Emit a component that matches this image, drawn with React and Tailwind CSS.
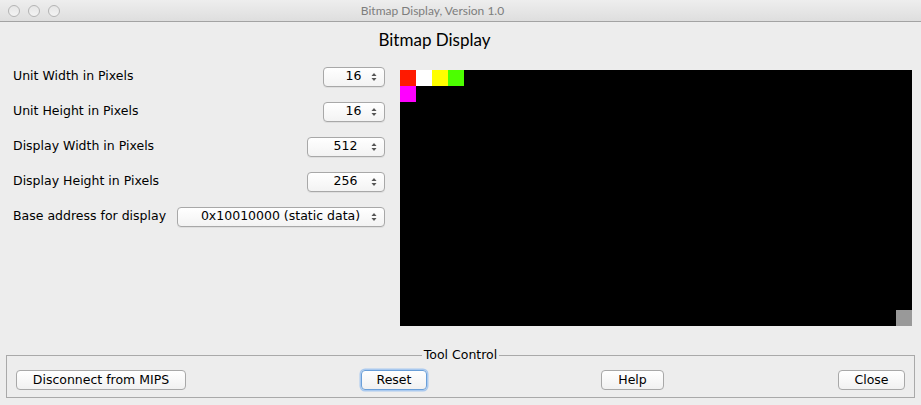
import { useState } from 'react'

const font = { fontFamily: '"DejaVu Sans", "Liberation Sans", sans-serif' }
const lato = { fontFamily: 'Lato, "DejaVu Sans", sans-serif' }

const Arrows = () => (
  <svg width="6" height="10" viewBox="0 0 6 10" className="shrink-0">
    <path d="M3 1 L5.5 4 L0.5 4 Z" fill="#555" />
    <path d="M3 9 L5.5 6 L0.5 6 Z" fill="#555" />
  </svg>
)

const Combo = ({ value, width }) => (
  <div
    className={`${width} h-[20px] flex items-center justify-between pl-3 pr-[7px] rounded-[4px] border border-[#a8a8a8] bg-gradient-to-b from-white to-[#f3f3f3] shadow-[0_1px_0_rgba(0,0,0,0.06)] text-[12.5px] text-black`}
  >
    <span className="flex-1 text-center">{value}</span>
    <Arrows />
  </div>
)

const Button = ({ children, width, focused }) => (
  <button
    className={`${width} h-[20px] rounded-[4px] bg-gradient-to-b from-white to-[#f1f1f1] text-[12.5px] text-black ${
      focused
        ? 'border border-[#6a9fd8] shadow-[0_0_0_1.5px_#a9c9ef]'
        : 'border border-[#a8a8a8]'
    }`}
  >
    {children}
  </button>
)

const rows = [
  { label: 'Unit Width in Pixels', value: '16', width: 'w-[62px]' },
  { label: 'Unit Height in Pixels', value: '16', width: 'w-[62px]' },
  { label: 'Display Width in Pixels', value: '512', width: 'w-[78px]' },
  { label: 'Display Height in Pixels', value: '256', width: 'w-[78px]' },
  { label: 'Base address for display', value: '0x10010000 (static data)', width: 'w-[208px]' },
]

const pixels = [
  { x: 0, y: 0, c: 'bg-[#ff1a00]' },
  { x: 16, y: 0, c: 'bg-white' },
  { x: 32, y: 0, c: 'bg-[#ffff00]' },
  { x: 48, y: 0, c: 'bg-[#4cff00]' },
  { x: 0, y: 16, c: 'bg-[#ff00ff]' },
  { x: 496, y: 240, c: 'bg-[#999999]' },
]

const App = () => {
  const [rowsState] = useState(rows)

  return (
    <div className="w-[921px] h-[405px] bg-[#ededed] flex flex-col overflow-hidden" style={font}>
      {/* title bar */}
      <div className="h-[22px] shrink-0 flex items-center bg-gradient-to-b from-[#eeeeee] to-[#dedede] border-b border-[#a3a3a3]">
        <div className="flex gap-2 pl-2">
          {[0, 1, 2].map((i) => (
            <div key={i} className="w-3 h-3 rounded-full border border-[#b4b4b4] bg-gradient-to-b from-[#e6e6e6] to-[#f3f3f3]" />
          ))}
        </div>
        <div className="flex-1 text-center text-[12px] text-[#7d7d7d] pr-[116px] pt-[1px]" style={lato}>
          Bitmap Display, Version 1.0
        </div>
      </div>

      <div className="h-[34px] shrink-0 flex items-center justify-center text-[17px] text-black pt-[1px] pr-[52px]" style={lato}>
        Bitmap Display
      </div>

      <div className="flex h-[274px] shrink-0">
        <div className="w-[400px] shrink-0 pl-[13px] pr-[15px] pt-[3px]">
          {rowsState.map((r) => (
            <div key={r.label} className="h-[35px] flex items-center justify-between">
              <span className="text-[12.5px] text-black">{r.label}</span>
              <Combo value={r.value} width={r.width} />
            </div>
          ))}
        </div>
        <div className="pt-[14px]">
          <div className="w-[512px] h-[256px] bg-black relative">
            {pixels.map((p, i) => (
              <div
                key={i}
                className={`absolute w-4 h-4 ${p.c}`}
                style={{ left: p.x, top: p.y }}
              />
            ))}
          </div>
        </div>
      </div>

      <fieldset className="mx-[6px] w-[908px] h-[50px] border border-[#a9a9a9] px-[9px] pt-[8px] mt-[18px]">
        <legend className="mx-auto px-[2px] text-[12.5px] text-black leading-[14px]">Tool Control</legend>
        <div className="flex items-center">
          <Button width="w-[170px]">Disconnect from MIPS</Button>
          <div className="w-[175px]" />
          <Button width="w-[66px]" focused>Reset</Button>
          <div className="w-[174px]" />
          <Button width="w-[63px]">Help</Button>
          <div className="w-[174px]" />
          <Button width="w-[67px]">Close</Button>
        </div>
      </fieldset>
    </div>
  )
}

export default App
